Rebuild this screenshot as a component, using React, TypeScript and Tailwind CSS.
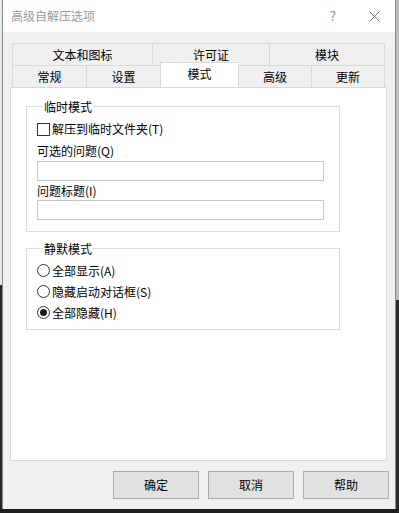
import React from 'react'

const font = { fontFamily: '"Noto Sans CJK SC", "Microsoft YaHei", sans-serif' }

function Tab({ label, w, last, active }: { label: string; w: string; last?: boolean; active?: boolean }) {
  if (active) {
    return (
      <div className={`${w} relative z-10 -mt-[2px] h-[25px] border-l border-t border-[#d9d9d9] bg-white flex items-start justify-center pt-[2px]`}>
        {label}
      </div>
    )
  }
  return (
    <div className={`${w} h-[22px] border-l border-t border-[#d9d9d9] flex items-center justify-center ${last ? 'border-r' : ''}`}>
      {label}
    </div>
  )
}

function Checkbox({ label }: { label: string }) {
  return (
    <div className="h-[22px] flex items-center">
      <span className="w-[13px] h-[13px] border border-[#333] bg-white mr-[2px]" />
      <span>{label}</span>
    </div>
  )
}

function Radio({ label, checked }: { label: string; checked?: boolean }) {
  return (
    <div className="h-[21px] flex items-center">
      <span className="w-[13px] h-[13px] rounded-full border border-[#333] bg-white mr-[2px] flex items-center justify-center">
        {checked && <span className="w-[7px] h-[7px] rounded-full bg-[#1a1a1a]" />}
      </span>
      <span>{label}</span>
    </div>
  )
}

function Group({ title, children, className }: { title: string; children: React.ReactNode; className?: string }) {
  return (
    <fieldset className={`border border-[#dcdcdc] w-[314px] pl-[10px] ${className ?? ''}`}>
      <legend className="ml-[6px] px-[1px] leading-[17px]">{title}</legend>
      {children}
    </fieldset>
  )
}

function Btn({ label }: { label: string }) {
  return (
    <button className="w-[86px] h-[28px] border border-[#adadad] bg-[#e1e1e1] text-[12px] text-black">
      {label}
    </button>
  )
}

export default function App() {
  return (
    <div className="w-[399px] h-[513px] bg-[#1f1f1f] flex flex-col text-[12px] text-black" style={font}>
      <div className="flex h-[509px]">
        <div className="w-[2px] flex flex-col">
          <div className="h-[285px] bg-[#e9e9e9]" />
          <div className="flex-1 bg-[#262626]" />
        </div>
        <div className="w-[394px] border-x border-[#8a8a8a] flex flex-col bg-[#f0f0f0]">
          {/* title bar */}
          <div className="h-[32px] bg-white flex items-center pl-[8px]">
            <span className="text-[#9a9a9a] text-[12px]">高级自解压选项</span>
            <span className="ml-auto text-[#8a8a8a] text-[13px] mr-[33px]">?</span>
            <svg width="11" height="11" viewBox="0 0 11 11" className="mr-[15px]">
              <path d="M0.5 0.5 L10.5 10.5 M10.5 0.5 L0.5 10.5" stroke="#777" strokeWidth="1" />
            </svg>
          </div>

          <div className="flex-1 pt-[11px] pl-[7px] flex flex-col">
            {/* tabs */}
            <div className="ml-[2px] w-[373px]">
              <div className="flex">
                <Tab label="文本和图标" w="w-[140px]" />
                <Tab label="许可证" w="w-[117px]" />
                <Tab label="模块" w="w-[116px]" last />
              </div>
              <div className="flex items-end h-[22px]">
                <Tab label="常规" w="w-[74px]" />
                <Tab label="设置" w="w-[74px]" />
                <Tab label="模式" w="w-[78px]" active />
                <Tab label="高级" w="w-[73px]" />
                <Tab label="更新" w="w-[74px]" last />
              </div>
            </div>

            {/* panel */}
            <div className="w-[377px] h-[374px] border border-[#d9d9d9] bg-white pl-[15px] pt-[10px]">
              <Group title="临时模式" className="pb-[11px]">
                <div className="mt-[3px]">
                  <Checkbox label="解压到临时文件夹(T)" />
                </div>
                <div className="h-[21px] flex items-center">可选的问题(Q)</div>
                <div className="w-[287px] h-[20px] border border-[#c8c8c8] bg-white" />
                <div className="h-[19px] flex items-center">问题标题(I)</div>
                <div className="w-[287px] h-[20px] border border-[#c8c8c8] bg-white" />
              </Group>

              <Group title="静默模式" className="mt-[8px] pb-[6px]">
                <div className="mt-[3px]">
                  <Radio label="全部显示(A)" />
                  <Radio label="隐藏启动对话框(S)" />
                  <Radio label="全部隐藏(H)" checked />
                </div>
              </Group>
            </div>

            {/* buttons */}
            <div className="mt-[10px] flex gap-[9px] pl-[103px]">
              <Btn label="确定" />
              <Btn label="取消" />
              <Btn label="帮助" />
            </div>
          </div>
        </div>
        <div className="flex-1 flex flex-col">
          <div className="h-[300px] bg-[#bcbcbc]" />
          <div className="flex-1 bg-[#2a2a2a]" />
        </div>
      </div>
      <div className="flex-1 bg-[#1f1f1f]" />
    </div>
  )
}
